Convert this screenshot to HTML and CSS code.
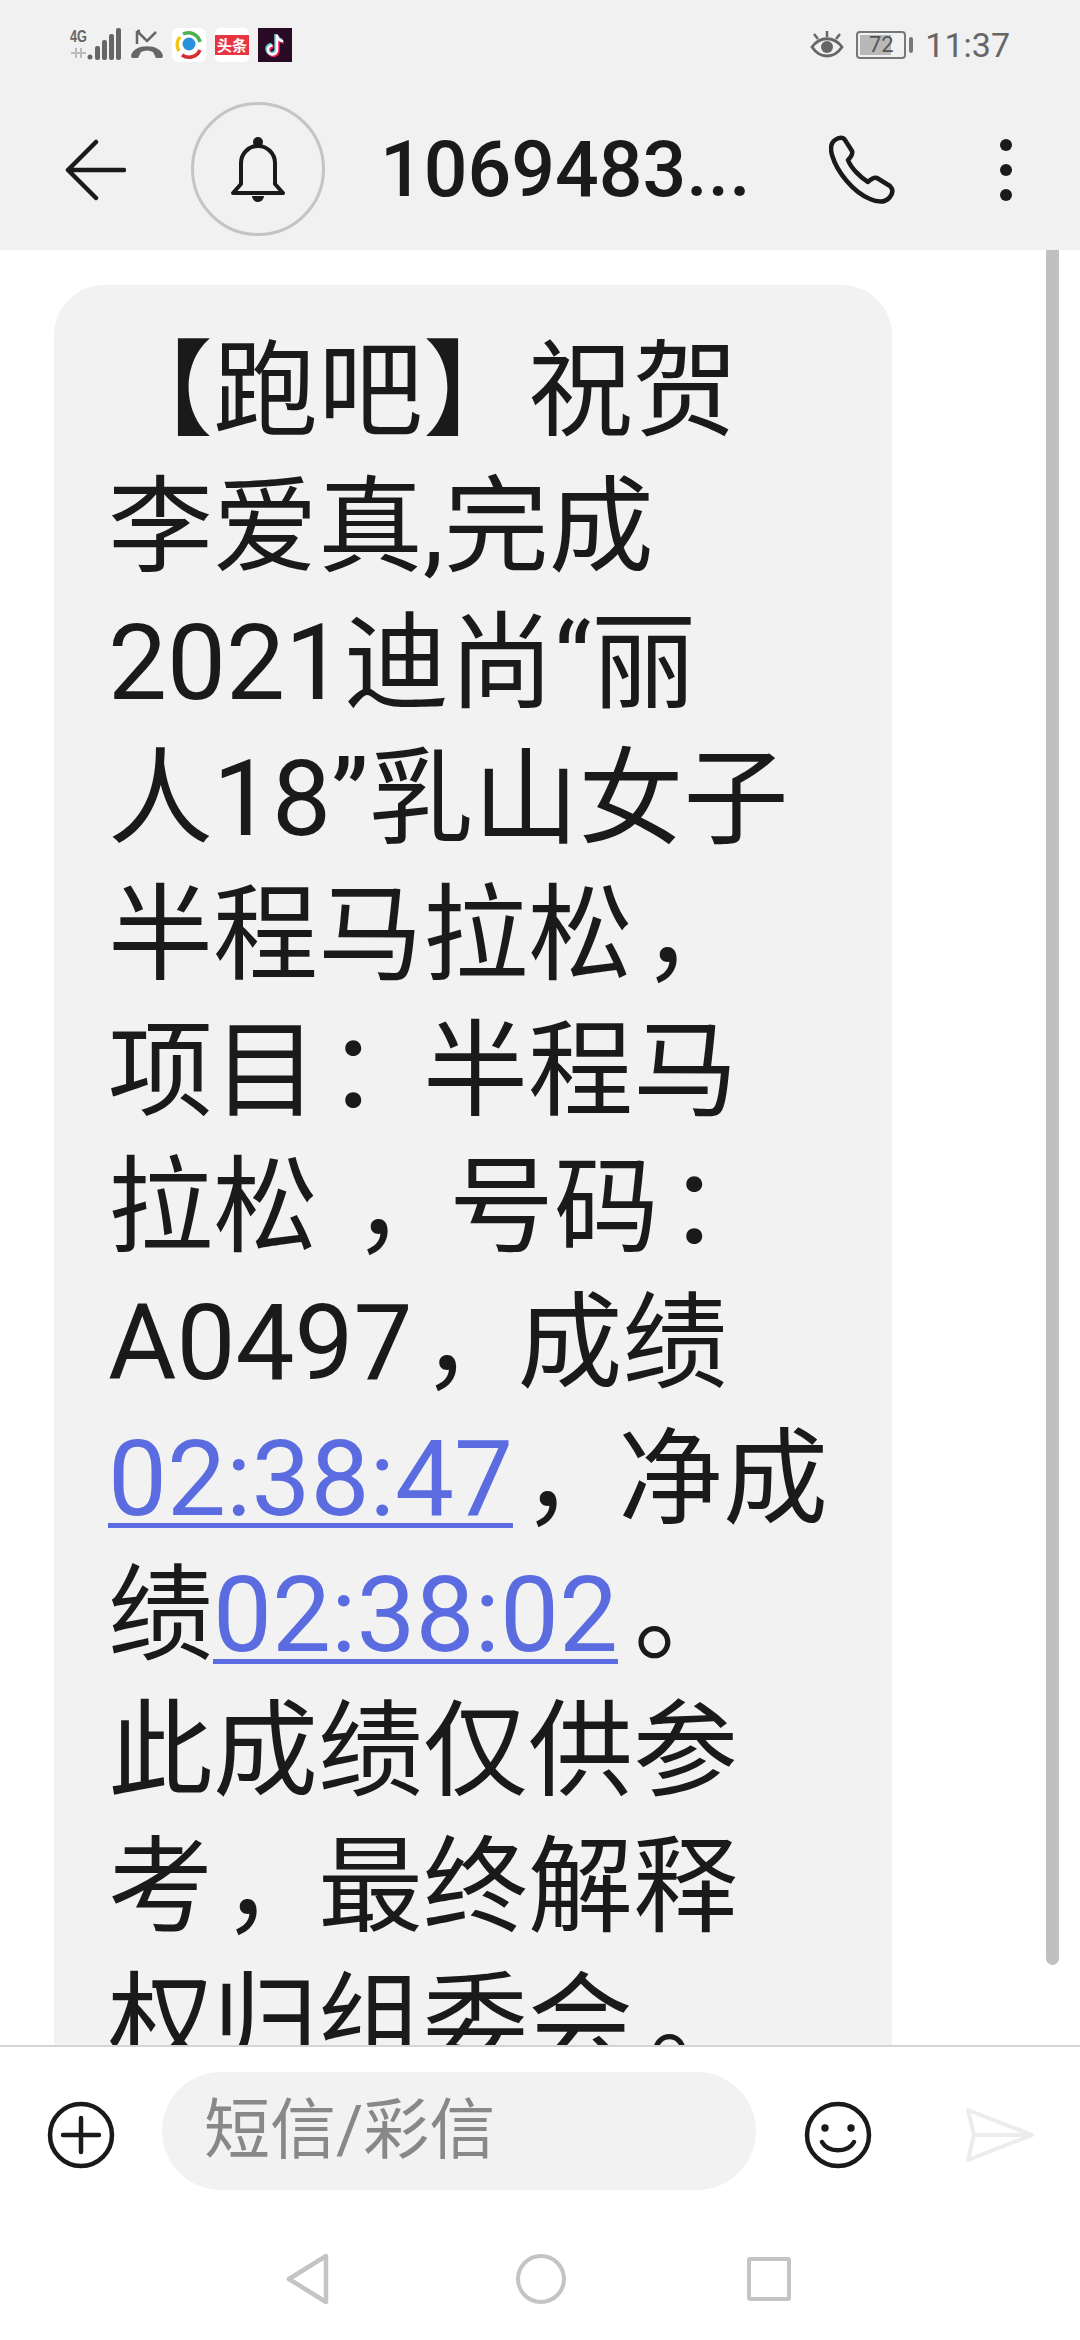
FILE: index.html
```html
<!DOCTYPE html>
<html lang="zh-CN">
<head>
  <meta charset="UTF-8" />
  <meta name="viewport" content="width=device-width, initial-scale=1" />
  <title>1069483...</title>
  <link rel="stylesheet" href="styles.css">
</head>
<body>
  <div class="phone">
    <header class="top">
      <div class="status">
        <div class="status-left">
          <svg width="52" height="34" viewBox="0 0 52 34">
            <text x="0" y="14" class="net" textLength="17" lengthAdjust="spacingAndGlyphs">4G</text>
            <path d="M1 25h15M6 20v10M11 20v10" class="updown"/>
            <circle cx="20" cy="29" r="2.5" fill="#666"/>
            <rect x="25" y="18" width="5" height="14" rx="2" fill="#666"/>
            <rect x="32" y="12" width="5" height="20" rx="2" fill="#666"/>
            <rect x="39" y="6" width="5" height="26" rx="2" fill="#666"/>
            <rect x="46" y="0" width="5" height="32" rx="2" fill="#666"/>
          </svg>
          <svg width="32" height="32" viewBox="0 0 32 32">
            <path d="M6 2v13M6 2h3M7 3l9 9 9-9" fill="none" stroke="#666" stroke-width="2.5"/>
            <path d="M0 27c2-13 30-13 32 0l-1 2h-6l-3-6c-4-2-8-2-12 0l-3 6H1z" fill="#666"/>
          </svg>
          <svg width="34" height="34" viewBox="0 0 34 34">
            <rect width="34" height="34" rx="6" fill="#fff"/>
            <path d="M7 23a12 12 0 0 1 1-14" fill="none" stroke="#f2c40f" stroke-width="3.5"/>
            <path d="M11 6a12 12 0 0 1 17 8" fill="none" stroke="#4caf50" stroke-width="3.5"/>
            <path d="M28 22a12 12 0 0 1-18 5" fill="none" stroke="#d32f2f" stroke-width="3.5"/>
            <circle cx="17" cy="16" r="6.5" fill="#2a8fdc"/>
          </svg>
          <div class="toutiao"><span>头条</span></div>
          <svg width="34" height="34" viewBox="0 0 34 34">
            <rect width="34" height="34" fill="#2a0b26"/>
            <path d="M19 7v15a4.5 4.5 0 1 1-4.5-4.5M19 7c0 4 3 6 6 6" fill="none" stroke="#ee1d52" stroke-width="3.5" transform="translate(1 1)"/>
            <path d="M19 7v15a4.5 4.5 0 1 1-4.5-4.5M19 7c0 4 3 6 6 6" fill="none" stroke="#69c9d0" stroke-width="3.5" transform="translate(-1 -1)"/>
            <path d="M19 7v15a4.5 4.5 0 1 1-4.5-4.5M19 7c0 4 3 6 6 6" fill="none" stroke="#fff" stroke-width="2.5"/>
          </svg>
        </div>
        <div class="status-right">
          <svg width="34" height="30" viewBox="0 0 34 30">
            <path d="M2 17c8-11 22-11 30 0-8 12-22 12-30 0z" fill="none" stroke="#666" stroke-width="2.8"/>
            <circle cx="17" cy="17" r="6" fill="#666"/>
            <path d="M17 1v6M4 4l4 5M30 4l-4 5" stroke="#666" stroke-width="2.5"/>
          </svg>
          <div class="battery">
            <div class="battery-body"><div class="battery-fill" style="width:72%"></div><span>72</span></div>
            <div class="battery-tip"></div>
          </div>
          <span class="clock">11:37</span>
        </div>
      </div>
      <div class="toolbar">
        <svg class="back" width="62" height="62" viewBox="0 0 62 62">
          <path d="M32 3L4 31l28 28M4 31h56" fill="none" stroke="#1a1a1a" stroke-width="4.5" stroke-linecap="round" stroke-linejoin="round"/>
        </svg>
        <div class="avatar">
          <svg width="54" height="66" viewBox="0 0 54 66">
            <path d="M10 48V27a17 17 0 0 1 34 0v21l8 9H2z" fill="none" stroke="#1a1a1a" stroke-width="4" stroke-linejoin="round"/>
            <circle cx="27" cy="6" r="5" fill="#1a1a1a"/>
            <path d="M21 60h12a6 6 0 0 1-12 0z" fill="#1a1a1a"/>
          </svg>
        </div>
        <h1 class="title">1069483...</h1>
        <svg class="call" width="70" height="70" viewBox="0 0 70 70">
          <path d="M6 5c4-3 8-3 10 0l7 11c1 3 0 5-4 9 3 8 12 17 20 22 4-4 6-5 9-4l13 8c3 3 3 7 0 11-4 5-11 6-20 2C24 57 8 37 3 20 1 13 2 8 6 5z" fill="none" stroke="#1a1a1a" stroke-width="4.5" stroke-linejoin="round"/>
        </svg>
        <div class="more"><i></i><i></i><i></i></div>
      </div>
    </header>

    <main class="thread">
      <div class="bubble">
        <div>【跑吧】祝贺</div>
        <div>李爱真,完成</div>
        <div>2021迪尚“丽</div>
        <div>人18”乳山女子</div>
        <div>半程马拉松<span class="pu">，</span></div>
        <div>项目<span class="pu">：</span>半程马</div>
        <div>拉松 <span class="pu">，</span>号码<span class="pu">：</span></div>
        <div>A0497<span class="pu">，</span>成绩</div>
        <div><a href="#">02:38:47</a><span class="pu">，</span>净成</div>
        <div>绩<a href="#">02:38:02</a><span class="pu dot">。</span></div>
        <div>此成绩仅供参</div>
        <div>考<span class="pu">，</span>最终解释</div>
        <div>权归组委会<span class="pu dot">。</span></div>
      </div>
      <div class="scrollbar"></div>
    </main>

    <footer class="bottom">
      <div class="compose">
        <svg width="68" height="68" viewBox="0 0 68 68">
          <circle cx="34" cy="34" r="31" fill="none" stroke="#1a1a1a" stroke-width="4.5"/>
          <path d="M34 17v34M16 34h36" stroke="#1a1a1a" stroke-width="4.5" stroke-linecap="round"/>
        </svg>
        <div class="input">短信/彩信</div>
        <svg width="68" height="68" viewBox="0 0 68 68">
          <circle cx="34" cy="34" r="31" fill="none" stroke="#1a1a1a" stroke-width="4.5"/>
          <circle cx="21" cy="27" r="3.7" fill="#1a1a1a"/>
          <circle cx="47" cy="27" r="3.7" fill="#1a1a1a"/>
          <path d="M18 41c6 11 26 11 32 0" fill="none" stroke="#1a1a1a" stroke-width="4.5" stroke-linecap="round"/>
        </svg>
        <svg class="send" width="68" height="54" viewBox="0 0 68 54">
          <path d="M2 2l64 25L2 52l6-25zM8 27h58" fill="none" stroke="#ececec" stroke-width="4" stroke-linejoin="round"/>
        </svg>
      </div>
      <nav class="navbar">
        <svg width="44" height="52" viewBox="0 0 44 52">
          <path d="M40 3v46L3 26z" fill="none" stroke="#c4c4c4" stroke-width="4.5" stroke-linejoin="round"/>
        </svg>
        <div class="nav-circle"></div>
        <div class="nav-square"></div>
      </nav>
    </footer>
  </div>
</body>
</html>
```

FILE: styles.css
```css
* {
  box-sizing: border-box;
}
body {
  margin: 0;
  background: #fff;
  font-family: Roboto, "Noto Sans CJK SC", sans-serif;
}
.phone {
  width: 1080px;
  height: 2340px;
  display: flex;
  flex-direction: column;
  overflow: hidden;
}
.top {
  height: 250px;
  background: #f1f1f1;
  flex: none;
}
.status {
  height: 90px;
  padding: 0 70px;
  display: flex;
  justify-content: space-between;
  align-items: center;
}
.status-left, .status-right {
  display: flex;
  align-items: center;
}
.status-left {
  gap: 9px;
}
.status-left svg, .toutiao {
  display: block;
}
.net {
  font-family: "Liberation Sans", sans-serif;
  font-size: 17px;
  font-weight: 700;
  fill: #666;
}
.updown {
  stroke: #bbb;
  stroke-width: 2;
  fill: none;
}
.toutiao {
  width: 34px;
  height: 34px;
  background: #fff;
  border-radius: 5px;
  display: flex;
  align-items: center;
}
.toutiao span {
  display: block;
  width: 100%;
  background: #e8353f;
  color: #fff;
  font-family: "Noto Sans CJK SC", sans-serif;
  font-size: 15px;
  font-weight: 700;
  line-height: 20px;
  text-align: center;
}
.status-right {
  gap: 12px;
}
.battery {
  display: flex;
  align-items: center;
  gap: 3px;
}
.battery-body {
  position: relative;
  width: 50px;
  height: 28px;
  border: 2px solid #777;
  border-radius: 4px;
  padding: 2px;
}
.battery-fill {
  height: 100%;
  background: #b8b8b8;
}
.battery-body span {
  position: absolute;
  inset: 0;
  text-align: center;
  font-size: 22px;
  line-height: 24px;
  color: #555;
}
.battery-tip {
  width: 4px;
  height: 16px;
  background: #777;
  border-radius: 2px;
}
.clock {
  font-size: 34px;
  color: #666;
}
.toolbar {
  height: 160px;
  display: flex;
  align-items: center;
  padding-left: 64px;
}
.back {
  flex: none;
}
.avatar {
  width: 134px;
  height: 134px;
  margin-left: 65px;
  margin-top: -2px;
  border: 3px solid #c4c4c4;
  border-radius: 50%;
  display: flex;
  align-items: center;
  justify-content: center;
  flex: none;
}
.title {
  margin: 0 0 0 55px;
  width: 449px;
  font-size: 77px;
  font-weight: 500;
  color: #1a1a1a;
  white-space: nowrap;
}
.call {
  flex: none;
}
.more {
  margin-left: 101px;
  display: flex;
  flex-direction: column;
  gap: 13px;
}
.more i {
  display: block;
  width: 12px;
  height: 12px;
  background: #1a1a1a;
  border-radius: 50%;
}
.thread {
  position: relative;
  flex: 1;
  overflow: hidden;
  padding: 35px 0 0 54px;
}
.bubble {
  width: 838px;
  padding: 39px 40px 60px 54px;
  background: #f2f2f2;
  border-radius: 50px;
  font-size: 105px;
  line-height: 136px;
  color: #1a1a1a;
  white-space: nowrap;
}
.bubble a {
  color: #5b6ce0;
  text-decoration-thickness: 5px;
  text-underline-offset: 8px;
}
/* full-width punctuation sits further into its box on the phone */
.pu {
  position: relative;
  left: 9px;
}
.pu.dot {
  left: 16px;
}
.scrollbar {
  position: absolute;
  top: 0;
  right: 21px;
  width: 13px;
  height: 1715px;
  background: #c0c0c0;
  border-radius: 0 0 7px 7px;
}
.bottom {
  flex: none;
  height: 295px;
  background: #fff;
  border-top: 2px solid #d4d4d4;
}
.compose {
  height: 143px;
  padding: 25px 0 0 47px;
  display: flex;
  align-items: center;
}
.compose svg {
  margin-top: 8px;
}
.input {
  width: 594px;
  height: 118px;
  margin: 0 48px 0 47px;
  padding-left: 42px;
  background: #f2f2f2;
  border-radius: 59px;
  font-size: 66px;
  line-height: 118px;
  color: #888;
}
.compose .send {
  margin-left: 94px;
}
.navbar {
  display: flex;
  align-items: center;
  padding: 63px 0 0 286px;
}
.nav-circle {
  width: 50px;
  height: 50px;
  margin-left: 186px;
  border: 4px solid #c4c4c4;
  border-radius: 50%;
}
.nav-square {
  width: 44px;
  height: 44px;
  margin-left: 181px;
  border: 4px solid #c4c4c4;
  border-radius: 3px;
}
```
